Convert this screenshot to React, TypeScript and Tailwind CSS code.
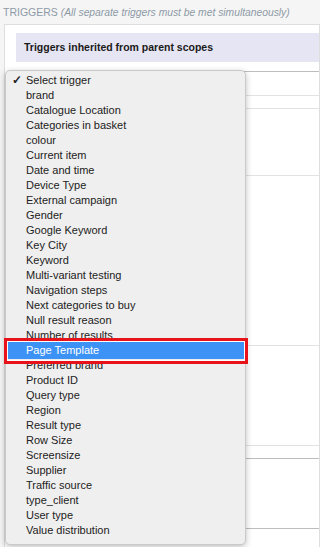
const triggers = [
  'Select trigger',
  'brand',
  'Catalogue Location',
  'Categories in basket',
  'colour',
  'Current item',
  'Date and time',
  'Device Type',
  'External campaign',
  'Gender',
  'Google Keyword',
  'Key City',
  'Keyword',
  'Multi-variant testing',
  'Navigation steps',
  'Next categories to buy',
  'Null result reason',
  'Number of results',
  'Page Template',
  'Preferred brand',
  'Product ID',
  'Query type',
  'Region',
  'Result type',
  'Row Size',
  'Screensize',
  'Supplier',
  'Traffic source',
  'type_client',
  'User type',
  'Value distribution',
]

export default function App() {
  return (
    <div
      className="relative h-[547px] w-full min-w-[251px] overflow-hidden bg-[#f5f5f5] text-[11px]"
      style={{ fontFamily: '"Liberation Sans", Arial, sans-serif' }}
    >
      <div className="h-[24px] whitespace-nowrap pl-[3px] pt-[6px] text-[10.5px] leading-[13px] text-[#8d9aa6]">
        TRIGGERS <span className="text-[10.3px] italic">(All separate triggers must be met simultaneously)</span>
      </div>
      <div className="ml-[4px] h-[600px] border border-[#dedede] bg-white pl-[11px] pt-[8px]">
        <div className="flex h-[29px] items-center whitespace-nowrap bg-[#e6e5f3] pl-[8px] text-[10.5px] font-bold text-[#1a1a1a]">
          Triggers inherited from parent scopes
        </div>
        <div className="mt-[9px] flex flex-col">
          <div className="h-[24px] border-t border-[#bdbdbd]" />
          <div className="h-[13px] border-t border-[#e2e2e2]" />
          <div className="h-[67px] border-t border-[#e2e2e2]" />
          <div className="h-[170px] border-t border-[#e2e2e2]" />
          <div className="h-[100px] border-t border-[#e2e2e2]" />
          <div className="h-[13px] border-t border-[#e2e2e2]" />
          <div className="h-[70px] border-t border-[#bdbdbd]" />
          <div className="h-[25px] border-t border-[#bdbdbd]" />
          <div className="h-[17px] border-t border-[#bdbdbd]" />
        </div>
      </div>

      <div className="absolute left-[5px] top-[70px] h-[475px] w-[241px] rounded-[5px] border border-[#c9c9c9] bg-[#efefef] pt-[2px] shadow-[0_2px_6px_rgba(0,0,0,0.25)]">
        {triggers.map((t, i) => (
          <div
            key={t}
            className={
              i === 18
                ? 'relative h-[15px] whitespace-nowrap bg-[#3d93f5] pl-[20px] leading-[15px] text-white shadow-[0_1px_0_#3d93f5,0_-1px_0_#3d93f5]'
                : 'relative h-[15px] whitespace-nowrap pl-[20px] leading-[15px] text-[#222]'
            }
          >
            {i === 0 && <span className="absolute left-[6px] top-0 text-[12px] font-bold">✓</span>}
            {t}
          </div>
        ))}
      </div>
      <div className="absolute left-[4px] top-[338px] h-[26px] w-[244px] border-[3px] border-[#e8121b] shadow-[inset_0_0_0_1px_#ffffff]" />
    </div>
  )
}
